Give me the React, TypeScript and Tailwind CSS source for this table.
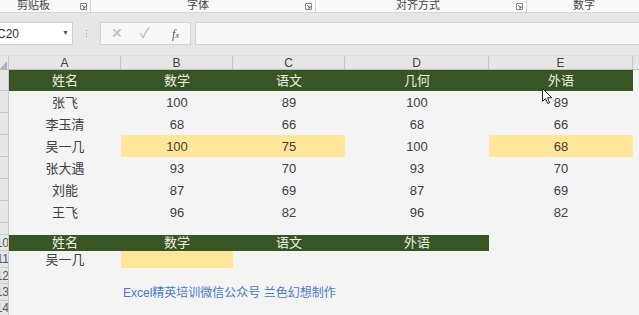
import React from "react";

const font = { fontFamily: '"Liberation Sans", "Noto Sans CJK SC", sans-serif' };

type Cell = { v: string | number; hl?: boolean };

const W = ["w-[112px]", "w-[112px]", "w-[112px]", "w-[144px]", "w-[144px]"];

const rows: Cell[][] = [
  [{ v: "张飞" }, { v: 100 }, { v: 89 }, { v: 100 }, { v: 89 }],
  [{ v: "李玉清" }, { v: 68 }, { v: 66 }, { v: 68 }, { v: 66 }],
  [{ v: "吴一几" }, { v: 100, hl: true }, { v: 75, hl: true }, { v: 100 }, { v: 68, hl: true }],
  [{ v: "张大遇" }, { v: 93 }, { v: 70 }, { v: 93 }, { v: 70 }],
  [{ v: "刘能" }, { v: 87 }, { v: 69 }, { v: 87 }, { v: 69 }],
  [{ v: "王飞" }, { v: 96 }, { v: 82 }, { v: 96 }, { v: 82 }],
];

const RowHead = ({ n }: { n?: string }) => (
  <div className="w-[9px] shrink-0 overflow-hidden bg-[#e6e6e6] border-r border-b border-[#c9c9c9] flex items-center justify-end">
    {n && <span className="text-[12px] leading-none text-[#555] mr-[-1px]">{n}</span>}
  </div>
);

const Launcher = () => (
  <svg width="7" height="7" viewBox="0 0 7 7" className="shrink-0">
    <path d="M0.5 0.5H6.5V6.5H0.5Z" fill="none" stroke="#888" strokeWidth="1" />
    <path d="M2 2L5 5M5 3V5H3" fill="none" stroke="#666" strokeWidth="1" />
  </svg>
);

export default function App() {
  return (
    <div className="relative w-[639px] h-[315px] overflow-hidden bg-[#e6e6e6] text-[#404040]" style={font}>
      {/* ribbon group labels */}
      <div className="h-[13px] bg-[#fafafa] border-b border-[#d6d6d6] flex text-[11px] text-[#444] leading-[11px]">
        <div className="w-[91px] flex items-start justify-between pl-[17px] pr-[3px] border-r border-[#d6d6d6]">
          <span>剪贴板</span>
          <div className="mt-[3px]"><Launcher /></div>
        </div>
        <div className="w-[225px] flex items-start justify-between pl-[96px] pr-[3px] border-r border-[#d6d6d6]">
          <span>字体</span>
          <div className="mt-[3px]"><Launcher /></div>
        </div>
        <div className="w-[211px] flex items-start justify-between pl-[80px] pr-[3px] border-r border-[#d6d6d6]">
          <span>对齐方式</span>
          <div className="mt-[3px]"><Launcher /></div>
        </div>
        <div className="flex-1 flex items-start pl-[46px]">
          <span>数字</span>
        </div>
      </div>

      {/* formula bar */}
      <div className="mt-[9px] h-[23px] flex">
        <div className="w-[73px] bg-white border border-l-0 border-[#cfcfcf] flex items-center justify-between pr-[3px]">
          <span className="text-[12px] text-[#333] -ml-[3px]">C20</span>
          <span className="text-[7px] text-[#555]">▼</span>
        </div>
        <div className="w-[27px] flex items-center justify-center">
          <div className="flex flex-col gap-[2px]">
            <span className="w-[1px] h-[1px] bg-[#999]" />
            <span className="w-[1px] h-[1px] bg-[#999]" />
            <span className="w-[1px] h-[1px] bg-[#999]" />
          </div>
        </div>
        <div className="w-[91px] bg-[#f7f7f7] border border-[#d4d4d4] flex items-center pl-[10px]">
          <span className="text-[14px] text-[#b5b5b5] w-[29px]">✕</span>
          <span className="text-[14px] text-[#b5b5b5] w-[32px]">✓</span>
          <span className="text-[12px] italic text-[#555]" style={{ fontFamily: '"Liberation Serif", serif' }}>f<span className="text-[9px]">x</span></span>
        </div>
        <div className="ml-[4px] flex-1 bg-[#f8f8f8] border border-r-0 border-[#d4d4d4]" />
      </div>

      {/* column headers */}
      <div className="mt-[10px] h-[15px] flex bg-[#e6e6e6] border-t border-[#d9d9d9] border-b border-b-[#bdbdbd]">
        <div className="w-[9px] border-r border-[#c9c9c9] flex items-end">
          <svg width="7" height="8" viewBox="0 0 7 8"><path d="M7 0V8H0Z" fill="#b3b3b3" /></svg>
        </div>
        {["A", "B", "C", "D", "E"].map((c, i) => (
          <div key={c} className={`${W[i]} border-r border-[#c6c6c6] flex items-center justify-center text-[12px] text-[#444]`}>
            {c}
          </div>
        ))}
        <div className="flex-1" />
      </div>

      {/* sheet */}
      <div className="flex flex-col bg-[#f4f4f4]">
        <div className="h-[21px] flex">
          <RowHead />
          <div className="flex bg-[#375623] text-[#eeeee6] text-[13px]">
            {["姓名", "数学", "语文", "几何", "外语"].map((t, i) => (
              <div key={t} className={`${W[i]} flex items-center justify-center pt-[1px]`}>{t}</div>
            ))}
          </div>
        </div>
        {rows.map((r, ri) => (
          <div key={ri} className="h-[22px] flex">
            <RowHead />
            {r.map((c, i) => (
              <div key={i} className={`${W[i]} flex items-center justify-center pt-[2px] text-[13px] ${c.hl ? "bg-[#ffe699]" : ""}`}>
                {c.v}
              </div>
            ))}
          </div>
        ))}
        <div className="h-[12px] flex"><RowHead /></div>
        <div className="h-[16px] flex">
          <RowHead n="10" />
          <div className="flex bg-[#375623] text-[#eeeee6] text-[13px]">
            {["姓名", "数学", "语文", "外语"].map((t, i) => (
              <div key={t} className={`${W[i]} flex items-center justify-center`}>{t}</div>
            ))}
          </div>
        </div>
        <div className="h-[17px] flex">
          <RowHead n="11" />
          <div className={`${W[0]} flex items-center justify-center text-[13px]`}>吴一几</div>
          <div className={`${W[1]} bg-[#ffe699]`} />
        </div>
        <div className="h-[16px] flex"><RowHead n="12" /></div>
        <div className="h-[17px] flex">
          <RowHead n="13" />
          <div className="pl-[114px] flex items-center text-[12px] text-[#4a78c8] whitespace-nowrap">
            Excel精英培训微信公众号 兰色幻想制作
          </div>
        </div>
        <div className="h-[15px] flex"><RowHead n="14" /></div>
        <div className="h-[15px] flex"><RowHead n="15" /></div>
      </div>

      {/* mouse pointer */}
      <svg className="absolute left-[542px] top-[88px]" width="11" height="17" viewBox="0 0 11 17">
        <path d="M0.5 0.5V13.5L3.5 10.5L5.7 15.5L7.6 14.7L5.5 9.8H9.8Z" fill="#fff" stroke="#222" strokeWidth="1" strokeLinejoin="round" />
      </svg>
    </div>
  );
}
